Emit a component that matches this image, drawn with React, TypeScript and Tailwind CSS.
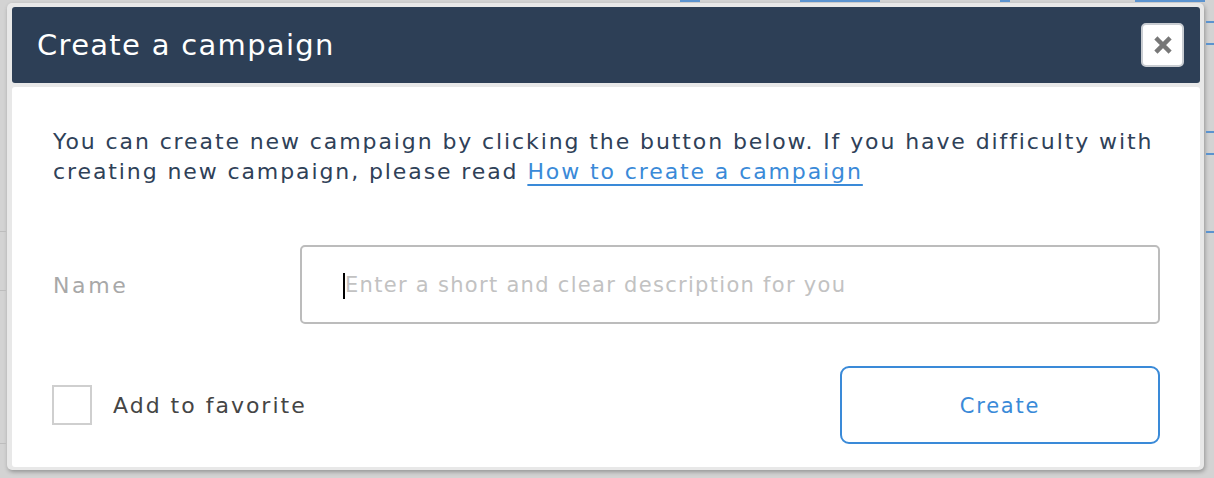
import React from "react";

export default function App() {
  const font = { fontFamily: '"DejaVu Sans", "Open Sans", sans-serif' };
  return (
    <div
      className="relative w-[1214px] h-[478px] overflow-hidden bg-[#d3d3d3]"
      style={font}
    >
      {/* underlying page fragments */}
      <div className="absolute left-[1206px] top-[21px] w-[8px] h-[2px] bg-[#5b93cf]" />
      <div className="absolute left-[1206px] top-[43px] w-[8px] h-[2px] bg-[#5b93cf]" />
      <div className="absolute left-[1206px] top-[131px] w-[8px] h-[2px] bg-[#5b93cf]" />
      <div className="absolute left-[1206px] top-[153px] w-[8px] h-[2px] bg-[#5b93cf]" />
      <div className="absolute left-[1206px] top-[231px] w-[8px] h-[2px] bg-[#5b93cf]" />
      <div className="absolute left-[0px] top-[231px] w-[6px] h-[1px] bg-[#bdbdbd]" />
      <div className="absolute left-[0px] top-[290px] w-[6px] h-[1px] bg-[#bdbdbd]" />
      <div className="absolute left-[0px] top-[443px] w-[6px] h-[1px] bg-[#bdbdbd]" />
      <div className="absolute left-[680px] top-[0px] w-[20px] h-[2px] bg-[#5b93cf]" />
      <div className="absolute left-[800px] top-[0px] w-[80px] h-[2px] bg-[#5b93cf]" />
      <div className="absolute left-[1000px] top-[0px] w-[10px] h-[2px] bg-[#5b93cf]" />
      <div className="absolute left-[1135px] top-[0px] w-[70px] h-[2px] bg-[#5b93cf]" />

      <div className="pt-[3px] pl-[7px]">
        <div className="w-[1197px] h-[467px] bg-[#e8e8e8] rounded-[5px] pl-[5px] pr-[4px] pb-[4px] pt-[4px] flex flex-col gap-[4px] shadow-[1px_2px_4px_rgba(0,0,0,0.3)]">
          {/* header */}
          <div className="h-[76px] shrink-0 bg-[#2d3f56] rounded-[3px] flex items-center justify-between pl-[25px] pr-[16px]">
            <h1 className="text-white text-[29px] leading-none tracking-[1.3px]">
              Create a campaign
            </h1>
            <button className="w-[43px] h-[44px] bg-white rounded-[5px] border-2 border-[#c9cdd2] flex items-center justify-center">
              <svg width="20" height="20" viewBox="0 0 20 20">
                <path
                  d="M4.5 4.5 L15.5 15.5 M15.5 4.5 L4.5 15.5"
                  stroke="#777777"
                  strokeWidth="4.5"
                  strokeLinecap="square"
                />
              </svg>
            </button>
          </div>
          {/* body */}
          <div className="flex-1 bg-white rounded-[3px] pl-[41px] pr-[40px] pt-[40px] pb-[23px] flex flex-col">
            <p className="text-[22px] leading-[30px] text-[#2f4158] tracking-[1.9px] whitespace-nowrap">
              You can create new campaign by clicking the button below. If you have difficulty with
              <br />
              creating new campaign, please read{" "}
              <a className="text-[#3a8ad8] underline decoration-2 underline-offset-[5px]" href="#">
                How to create a campaign
              </a>
            </p>
            <div className="mt-[58px] flex items-center">
              <label className="w-[247px] text-[22px] text-[#a8a8a8] tracking-[2.6px] pt-[2px]">Name</label>
              <div className="flex-1 h-[79px] border-2 border-[#bcbcbc] rounded-[5px] flex items-center pl-[41px] pt-[3px]">
                <span className="w-[2px] h-[26px] bg-black" />
                <span className="text-[21px] text-[#c2c2c2] tracking-[1.3px]">
                  Enter a short and clear description for you
                </span>
              </div>
            </div>
            <div className="mt-[42px] flex items-center justify-between">
              <div className="flex items-center gap-[20px]">
                <span className="w-[40px] h-[40px] border-2 border-[#cfcfcf] -ml-px" />
                <span className="text-[22px] text-[#454545] tracking-[2px] pl-px">Add to favorite</span>
              </div>
              <button className="w-[320px] h-[78px] border-2 border-[#3a8ad8] rounded-[9px] text-[#3a8ad8] text-[21px] tracking-[1.8px] pt-[3px]">
                Create
              </button>
            </div>
          </div>
        </div>
      </div>
    </div>
  );
}
